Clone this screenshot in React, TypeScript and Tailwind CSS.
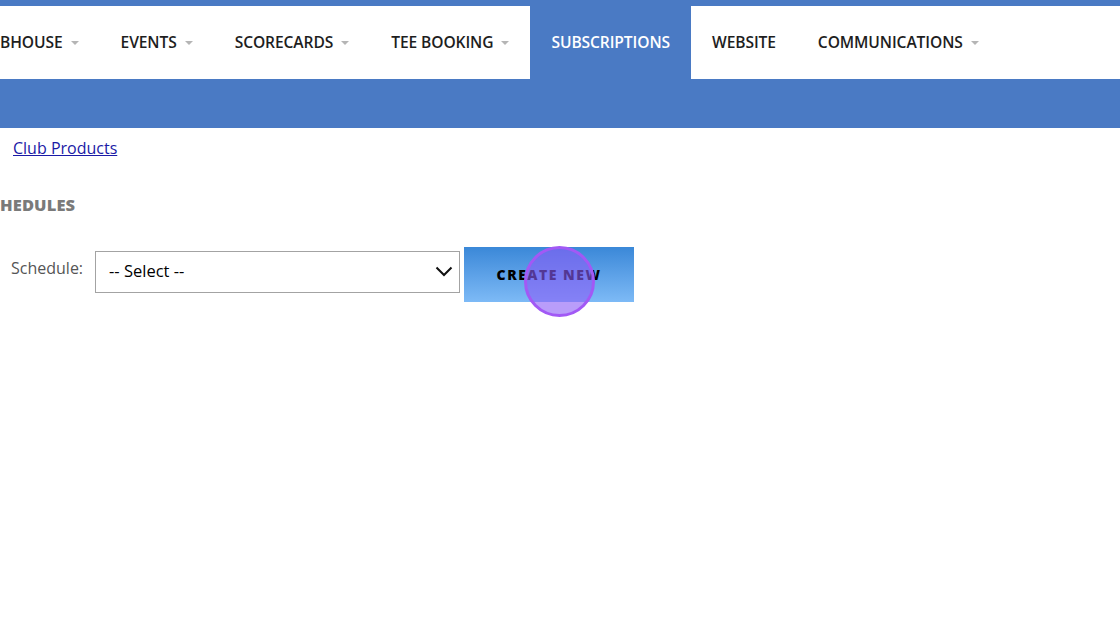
import React from 'react';

const Caret: React.FC = () => (
  <svg width="8" height="5" viewBox="0 0 8 5" className="ml-[8px] mt-[1px]">
    <path d="M0 0 L8 0 L4 4 Z" fill="#b5b5b5" />
  </svg>
);

type NavItem = { label: string; caret?: boolean; active?: boolean };

const items: NavItem[] = [
  { label: 'BHOUSE', caret: true },
  { label: 'EVENTS', caret: true },
  { label: 'SCORECARDS', caret: true },
  { label: 'TEE BOOKING', caret: true },
  { label: 'SUBSCRIPTIONS', active: true },
  { label: 'WEBSITE' },
  { label: 'COMMUNICATIONS', caret: true },
];

const App: React.FC = () => {
  return (
    <div className="w-[1120px] h-[625px] bg-white overflow-hidden" style={{ fontFamily: '"Open Sans", sans-serif' }}>
      {/* Header */}
      <div className="bg-[#4a7ac4] pt-[6px]">
        <nav className="bg-white h-[73px] flex items-stretch text-[15.6px] font-semibold text-[#1e1e1e]">
          {items.map((item, i) => (
            <div
              key={item.label}
              className={
                'flex items-center ' +
                (i === 0 ? 'pl-0 pr-[21px] ' : 'px-[21px] ') +
                (item.active ? 'bg-[#4a7ac4] text-white' : '')
              }
            >
              <span className="tracking-[-0.1px]">{item.label}</span>
              {item.caret && <Caret />}
            </div>
          ))}
        </nav>
        <div className="h-[49px]" />
      </div>

      {/* Content */}
      <div className="pt-[8px]">
        <a href="#" className="ml-[13px] text-[16px] text-[#1a1aa6] underline">
          Club Products
        </a>

        <h2 className="mt-[37px] text-[16.5px] font-extrabold text-[#7a7a7a] tracking-[0.1px] leading-none">
          HEDULES
        </h2>

        <div className="mt-[33px] flex items-start">
          <label className="ml-[11px] mt-[9px] text-[16px] text-[#555]">Schedule:</label>
          <div className="ml-[12px] mt-[4px] w-[365px] h-[42px] border border-[#a3a3a3] flex items-center justify-between pl-[13px] pr-[6px]">
            <span className="text-[16.5px] text-black">-- Select --</span>
            <svg width="18" height="11" viewBox="0 0 18 11">
              <path d="M1.5 1.5 L9 9 L16.5 1.5" fill="none" stroke="#111" strokeWidth="2" />
            </svg>
          </div>
          <div className="relative ml-[4px]">
            <button className="w-[170px] h-[55px] bg-gradient-to-b from-[#3a88d8] to-[#7dbaf6] text-[14px] font-extrabold tracking-[1.5px] text-black">
              CREATE NEW
            </button>
            <div className="absolute left-[60px] top-[-1px] w-[71px] h-[71px] rounded-full border-[3px] border-[#a259f5] bg-[#8b5cf6]/60" />
          </div>
        </div>
      </div>
    </div>
  );
};

export default App;
